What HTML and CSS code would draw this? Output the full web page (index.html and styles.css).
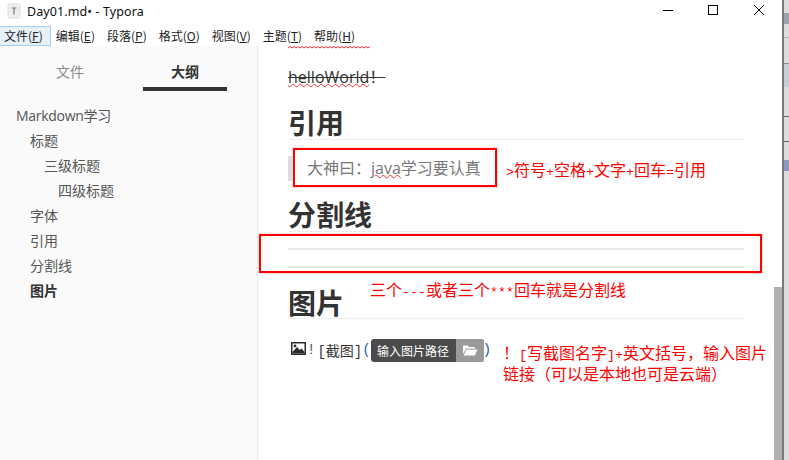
FILE: index.html
```html
<!DOCTYPE html>
<html lang="zh-CN">
<head>
<meta charset="utf-8">
<title>Day01.md• - Typora</title>
<link rel="stylesheet" href="styles.css">
</head>
<body>
<div class="screen">
  <div class="window">
    <header class="titlebar">
      <div class="title-left">
        <svg class="app-icon" width="16" height="16" viewBox="0 0 16 16"><rect x="2" y="1" width="12" height="14" rx="1.5" fill="#eeeeee" stroke="#dddddd"/><path d="M5.5 5h5M8 5v6.5" stroke="#777777" stroke-width="1.2" fill="none"/></svg>
        <span class="title-text">Day01.md• - Typora</span>
      </div>
      <div class="controls">
        <svg class="ctl" width="46" height="24" viewBox="0 0 46 24"><path d="M19 10.5h10" stroke="#000" fill="none"/></svg>
        <svg class="ctl" width="46" height="24" viewBox="0 0 46 24"><rect x="18.5" y="5.5" width="9" height="9" stroke="#000" fill="none"/></svg>
        <svg class="ctl" width="46" height="24" viewBox="0 0 46 24"><path d="M18 5l10 10M28 5L18 15" stroke="#000" fill="none"/></svg>
      </div>
    </header>
    <nav class="menubar">
      <span class="menu menu-active">文件(<u>F</u>)</span>
      <span class="menu">编辑(<u>E</u>)</span>
      <span class="menu">段落(<u>P</u>)</span>
      <span class="menu">格式(<u>O</u>)</span>
      <span class="menu">视图(<u>V</u>)</span>
      <span class="menu">主题(<u>T</u>)</span>
      <span class="menu">帮助(<u>H</u>)</span>
    </nav>
    <div class="body">
      <aside class="sidebar">
        <div class="tabs">
          <div class="tab">文件</div>
          <div class="tab tab-active">大纲</div>
        </div>
        <ul class="outline">
          <li class="lv1">Markdown学习</li>
          <li class="lv2">标题</li>
          <li class="lv3">三级标题</li>
          <li class="lv4">四级标题</li>
          <li class="lv2">字体</li>
          <li class="lv2">引用</li>
          <li class="lv2">分割线</li>
          <li class="lv2 current">图片</li>
        </ul>
      </aside>
      <main class="editor">
        <svg class="wave wave-top" width="82" height="3" viewBox="0 0 82 3"><path d="M0 2L2 0.5L4 2L6 0.5L8 2L10 0.5L12 2L14 0.5L16 2L18 0.5L20 2L22 0.5L24 2L26 0.5L28 2L30 0.5L32 2L34 0.5L36 2L38 0.5L40 2L42 0.5L44 2L46 0.5L48 2L50 0.5L52 2L54 0.5L56 2L58 0.5L60 2L62 0.5L64 2L66 0.5L68 2L70 0.5L72 2L74 0.5L76 2L78 0.5L80 2L82 0.5" stroke="#f03030" fill="none"/></svg>
        <p class="hello"><del><span class="spell">helloWorld</span>！</del></p>
        <h2 class="h-quote">引用</h2>
        <blockquote class="quote">大神曰：<span class="spell">java</span>学习要认真</blockquote>
        <h2 class="h-hr">分割线</h2>
        <hr class="rule rule-one">
        <hr class="rule rule-two">
        <h2 class="h-img">图片</h2>
        <div class="imgline">
          <svg class="img-icon" width="15" height="13" viewBox="0 0 15 13"><rect x="0" y="0" width="15" height="13" fill="#2b2b2b"/><rect x="1.5" y="1.5" width="12" height="10" fill="#fff"/><path d="M1.5 11.5V10L6 5L8.8 8L10.5 6.5L13.5 10V11.5Z" fill="#2b2b2b"/><circle cx="4" cy="4" r="1.4" fill="#2b2b2b"/></svg>
          <span class="mono-mark">!</span><span>[截图]</span><span class="paren">(</span>
          <span class="tip"><span class="tip-label">输入图片路径</span><span class="tip-btn"><svg width="16" height="11" viewBox="0 0 16 11"><path d="M1 0.5h5l1 1.5h6v1.5H4L1 9Z" fill="#fff"/><path d="M4.5 4.5H15.5L13 10.5H1.5Z" fill="#fff"/></svg></span></span>
          <span class="paren-close">)</span>
        </div>
      </main>
      <div class="scrollbar"><div class="thumb"></div></div>
    </div>
    <div class="mark box-quote"></div>
    <div class="mark box-hr"></div>
    <div class="note note-quote"><span class="half">&gt;</span>符号<span class="half">+</span>空格<span class="half">+</span>文字<span class="half">+</span>回车<span class="half">=</span>引用</div>
    <div class="note note-hr">三个<span class="half">---</span>或者三个<span class="half">***</span>回车就是分割线</div>
    <div class="note note-img">
      <div class="note-line">！<span class="half">[</span>写截图名字<span class="half">]+</span>英文括号，输入图片</div>
      <div class="note-line note-line-next">链接（可以是本地也可是云端）</div>
    </div>
  </div>
  <div class="behind">
    <i class="seg s1"></i><i class="seg s2"></i><i class="seg s3"></i><i class="seg s4"></i><i class="seg s5"></i><i class="seg s6"></i>
  </div>
</div>
</body>
</html>
```
FILE: styles.css
```css
* { box-sizing: border-box; }
html, body { margin: 0; padding: 0; }
body { width: 789px; height: 460px; overflow: hidden; background: #fff; font-family: "Open Sans", "Noto Sans CJK SC", sans-serif; color: #333; }
.screen { display: flex; width: 789px; height: 460px; }
.window { position: relative; width: 782px; height: 460px; display: flex; flex-direction: column; background: #fff; overflow: hidden; }
.behind { position: relative; width: 7px; height: 460px; background: #dcdcdc; border-left: 2px solid #7a7a7a; }
.seg { position: absolute; left: 0; width: 5px; height: 1px; background: #b4b4b4; }
.s1 { top: 13px; height: 11px; background: #9aa3ad; }
.s2 { top: 37px; }
.s3 { top: 63px; height: 24px; background: #c6ced6; border-top: 1px solid #8a8a8a; }
.s4 { top: 116px; background: #666; }
.s5 { top: 141px; background: #666; }
.s6 { top: 160px; height: 11px; background: #8d97c0; }

.titlebar { height: 24px; display: flex; justify-content: space-between; align-items: flex-start; flex: none; }
.title-left { display: flex; align-items: center; height: 22px; padding-left: 6px; gap: 5px; }
.title-text { font-family: "Noto Sans", sans-serif; font-size: 12.5px; color: #111; letter-spacing: .1px; }
.controls { display: flex; }
.ctl { display: block; }

.menubar { height: 22px; display: flex; align-items: center; flex: none; font-size: 12px; color: #222; font-family: "Noto Sans CJK SC", sans-serif; padding-top: 2px; }
.menu { height: 20px; line-height: 20px; white-space: nowrap; margin-right: 12px; }
.menu-active { padding: 0 7px 0 4px; margin-right: 5px; background: #e6f1fb; border: 1px solid #a9cdee; border-left: 0; line-height: 18px; }

.body { flex: 1; display: flex; min-height: 0; position: relative; }
.sidebar { width: 258px; flex: none; background: #fafafa; border-right: 1px solid #ececec; }
.tabs { display: grid; grid-template-columns: 143px 84px; height: 45px; }
.tab { text-align: center; font-size: 14px; color: #8a8a8a; line-height: 16px; padding-top: 17px; font-family: "Noto Sans CJK SC", sans-serif; }
.tab:first-child { padding-right: 3px; }
.tab-active { color: #333; font-weight: 700; border-bottom: 4px solid #333; }
.outline { list-style: none; margin: 12px 0 0; padding: 0; color: #555; }
.outline li { height: 25px; line-height: 25px; font-size: 14px; white-space: nowrap; }
.outline .lv1 { padding-left: 16px; letter-spacing: -.3px; }
.lv2 { padding-left: 30px; }
.lv3 { padding-left: 44px; }
.lv4 { padding-left: 58px; }
.outline .current { font-weight: 700; color: #333; }

.editor { flex: 1; padding-left: 30px; padding-right: 38px; min-width: 0; overflow: hidden; position: relative; font-size: 16px; }
.wave { display: block; }
.wave-top { margin-bottom: 18px; }
.hello { margin: 0; height: 21px; line-height: 21px; font-size: 16px; color: #333; }
.hello del { text-decoration: line-through; text-decoration-color: #333; }
h2 { margin: 0; font-size: 28px; font-weight: 700; line-height: 36px; height: 35px; border-bottom: 1px solid #eee; color: #333; }
.h-quote { margin-top: 17px; }
.quote { margin: 16px 0 0; height: 25px; border-left: 4px solid #ddd; padding-left: 15px; color: #777; font-size: 16px; line-height: 25px; }
.spell { text-decoration: underline wavy #f03030 1px; text-underline-offset: 0; }
.h-hr { margin-top: 16px; }
.rule { border: 0; height: 2px; background: #e7e7e7; margin: 16px 0 0; }
h2.h-img { margin-top: 17px; height: 34px; }
.imgline { margin-top: 18px; height: 26px; display: flex; align-items: center; font-size: 14px; color: #333; font-family: "Liberation Mono", "Noto Sans CJK SC", monospace; white-space: nowrap; }
.img-icon { margin: -4px 1px 0 3px; flex: none; }
.mono-mark { margin-right: 2px; color: #555; }
.paren { color: #2a5db0; }
.paren-close { color: #2a5db0; margin-left: -1px; }
.tip { display: flex; height: 23px; flex: none; font-family: "Noto Sans CJK SC", sans-serif; font-size: 12px; }
.tip-label { width: 85px; background: #4b4b4b; color: #fff; text-align: center; line-height: 23px; border-radius: 3px 0 0 3px; }
.tip-btn { width: 28px; background: #999; display: flex; align-items: center; justify-content: center; border-radius: 0 2px 2px 0; }

.scrollbar { position: absolute; top: 241px; right: 0; width: 8px; bottom: 0; }
.thumb { width: 8px; height: 100%; background: #b0b0b0; }

.mark { position: absolute; border: 2px solid #ff0000; box-shadow: 0 0 1px #ff5050; }
.box-quote { left: 293px; top: 148px; width: 204px; height: 39px; }
.box-hr { left: 259px; top: 234px; width: 503px; height: 39px; }
.note { position: absolute; color: #f00; font-size: 16px; line-height: 20px; font-family: "Noto Sans CJK SC", sans-serif; white-space: nowrap; }
.half { font-family: "Liberation Mono", monospace; font-size: 13.33px; }
.note-quote { left: 506px; top: 159px; }
.note-hr { left: 370px; top: 279px; }
.note-img { left: 503px; top: 342px; }
.note-line { height: 20px; }
.note-line-next { margin-top: 1px; }
```
